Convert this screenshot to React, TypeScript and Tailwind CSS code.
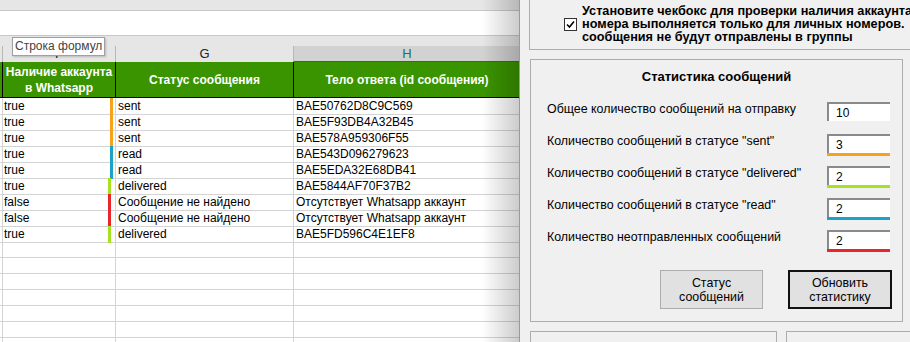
import React from 'react';

type Status = 'sent' | 'read' | 'delivered' | 'missing';

const rows: { has: string; status: Status; text: string; body: string }[] = [
  { has: 'true', status: 'sent', text: 'sent', body: 'BAE50762D8C9C569' },
  { has: 'true', status: 'sent', text: 'sent', body: 'BAE5F93DB4A32B45' },
  { has: 'true', status: 'sent', text: 'sent', body: 'BAE578A959306F55' },
  { has: 'true', status: 'read', text: 'read', body: 'BAE543D096279623' },
  { has: 'true', status: 'read', text: 'read', body: 'BAE5EDA32E68DB41' },
  { has: 'true', status: 'delivered', text: 'delivered', body: 'BAE5844AF70F37B2' },
  { has: 'false', status: 'missing', text: 'Сообщение не найдено', body: 'Отсутствует Whatsapp аккаунт' },
  { has: 'false', status: 'missing', text: 'Сообщение не найдено', body: 'Отсутствует Whatsapp аккаунт' },
  { has: 'true', status: 'delivered', text: 'delivered', body: 'BAE5FD596C4E1EF8' },
];

// цвет метки статуса в колонке F
const barClass: Record<Status, string> = {
  sent: 'bg-[#f7a21b] right-[2px]',
  read: 'bg-[#1aa3c8] right-[2px]',
  delivered: 'bg-[#a6e21f] right-[4px]',
  missing: 'bg-[#e8262b] right-[4px]',
};

const stats = [
  { label: 'Общее количество сообщений на отправку', value: '10', line: '' },
  { label: 'Количество сообщений в статусе "sent"', value: '3', line: 'bg-[#f7a21b]' },
  { label: 'Количество сообщений в статусе "delivered"', value: '2', line: 'bg-[#a6e21f]' },
  { label: 'Количество сообщений в статусе "read"', value: '2', line: 'bg-[#1aa3c8]' },
  { label: 'Количество неотправленных сообщений', value: '2', line: 'bg-[#e8262b]' },
];

const cols = 'grid grid-cols-[2px_113px_178px_227px] shrink-0';

const Sheet = () => {
  const empty = Array.from({ length: 7 });
  return (
    <div className="relative w-[520px] h-[342px] shrink-0 overflow-hidden flex flex-col bg-white text-[12px] leading-[15px] text-black">
      {/* лента и строка формул */}
      <div className="h-[11px] shrink-0 bg-[#e6e6e6] border-b border-[#c8c8c8]" />
      <div className="h-[25px] shrink-0 bg-white border-b border-[#c8c8c8]" />
      <div className="h-[10px] shrink-0 bg-[#e6e6e6]" />

      {/* заголовки колонок */}
      <div className={`${cols} h-[16px] bg-[#e6e6e6] text-[13px] leading-[15px] text-[#222]`}>
        <div />
        <div className="border-l border-[#b8b8b8] flex justify-center">F</div>
        <div className="border-l border-[#b8b8b8] flex justify-center">G</div>
        <div className="border-l border-[#b8b8b8] bg-[#d2d2d2] border-b-2 border-b-[#217346] flex justify-center text-[#217346]">
          H
        </div>
      </div>

      {/* зелёная шапка таблицы */}
      <div className={`${cols} h-[36px] bg-[#3a9400] border-b border-black text-white font-bold text-[12px] leading-[16px]`}>
        <div />
        <div className="border-l border-black flex items-center justify-center text-center">
          Наличие аккаунта
          <br />в Whatsapp
        </div>
        <div className="border-l border-black flex items-center justify-center">Статус сообщения</div>
        <div className="border-l border-black flex items-center justify-center">Тело ответа (id сообщения)</div>
      </div>

      {rows.map((r, i) => (
        <div key={i} className={`${cols} h-[16px]`}>
          <div className="border-b border-[#d4d4d4]" />
          <div className="relative border-l border-b border-[#d4d4d4] pl-[1px] pt-[1px]">
            {r.has}
            <span className={`absolute top-0 -bottom-px w-[3px] ${barClass[r.status]}`} />
          </div>
          <div className="border-l border-b border-[#d4d4d4] pl-[2px] pt-[1px] whitespace-nowrap">{r.text}</div>
          <div className="border-l border-b border-[#d4d4d4] pl-[2px] pt-[1px] whitespace-nowrap">{r.body}</div>
        </div>
      ))}
      {empty.map((_, i) => (
        <div key={'e' + i} className={`${cols} h-[16px]`}>
          <div className="border-b border-[#d4d4d4]" />
          <div className="border-l border-b border-[#d4d4d4]" />
          <div className="border-l border-b border-[#d4d4d4]" />
          <div className="border-l border-b border-[#d4d4d4]" />
        </div>
      ))}

      {/* тень от формы */}
      <div className="pointer-events-none absolute top-0 bottom-0 right-0 w-[38px] bg-gradient-to-r from-black/0 to-black/20 border-r border-[#9a9a9a]" />

      {/* подсказка */}
      <div className="absolute left-[12px] top-[37px] h-[19px] px-[2px] bg-white border border-[#a0a0a0] text-[12px] leading-[17px] text-[#444] shadow-[1px_1px_2px_rgba(0,0,0,0.2)]">
        Строка формул
      </div>
    </div>
  );
};

const Panel = () => (
  <div className="flex-1 min-w-0 overflow-hidden bg-[#f0f0f0] text-black text-[12.4px]">
    {/* чекбокс */}
    <div className="ml-[9px] mr-[-60px] mt-[-12px] h-[62px] border border-[#adadad] flex items-center pl-[34px] pt-[10px]">
      <span className="w-[13px] h-[13px] shrink-0 bg-white border border-[#333] flex items-center justify-center">
        <svg width="9" height="9" viewBox="0 0 9 9">
          <path d="M1 4.5 L3.5 7 L8 1.5" fill="none" stroke="#000" strokeWidth="1.6" />
        </svg>
      </span>
      <div className="ml-[5px] font-bold text-[12.7px] leading-[13px] whitespace-nowrap">
        <div>Установите чекбокс для проверки наличия аккаунта на Whatsapp. Проверка</div>
        <div>номера выполняется только для личных номеров.</div>
        <div>сообщения не будут отправлены в группы</div>
      </div>
    </div>

    {/* статистика */}
    <div className="ml-[10px] mt-[9px] w-[373px] h-[263px] border border-[#adadad] flex flex-col">
      <div className="pt-[10px] text-center font-bold text-[13px] leading-[14px]">Статистика сообщений</div>
      <div className="mt-[18px] flex flex-col pl-[16px] pr-[12px]">
        {stats.map((s) => (
          <div key={s.label} className="h-[32px] flex items-start">
            <div className="leading-[14px] whitespace-nowrap">{s.label}</div>
            <div className="ml-auto w-[63px] flex flex-col">
              <div className="h-[19px] bg-white border-t-2 border-l-2 border-t-[#8a8a8a] border-l-[#8a8a8a] pl-[7px] text-[12px] leading-[18px]">
                {s.value}
              </div>
              {s.line && <div className={`h-[3px] ${s.line}`} />}
            </div>
          </div>
        ))}
      </div>
      <div className="mt-[8px] flex justify-end gap-[25px] pr-[10px]">
        <button className="w-[103px] h-[39px] bg-[#e1e1e1] border border-[#adadad] leading-[14px]">
          Статус
          <br />
          сообщений
        </button>
        <button className="w-[104px] h-[39px] bg-[#e1e1e1] border-2 border-[#111] leading-[14px]">
          Обновить
          <br />
          статистику
        </button>
      </div>
    </div>

    <div className="mt-[9px] ml-[10px] flex gap-[9px]">
      <div className="w-[247px] h-[30px] shrink-0 border border-[#adadad]" />
      <div className="w-[200px] h-[30px] shrink-0 border border-[#adadad]" />
    </div>
  </div>
);

export default function App() {
  return (
    <div className="flex w-[910px] h-[342px] overflow-hidden font-['Liberation_Sans',Arial,sans-serif]">
      <Sheet />
      <Panel />
    </div>
  );
}
